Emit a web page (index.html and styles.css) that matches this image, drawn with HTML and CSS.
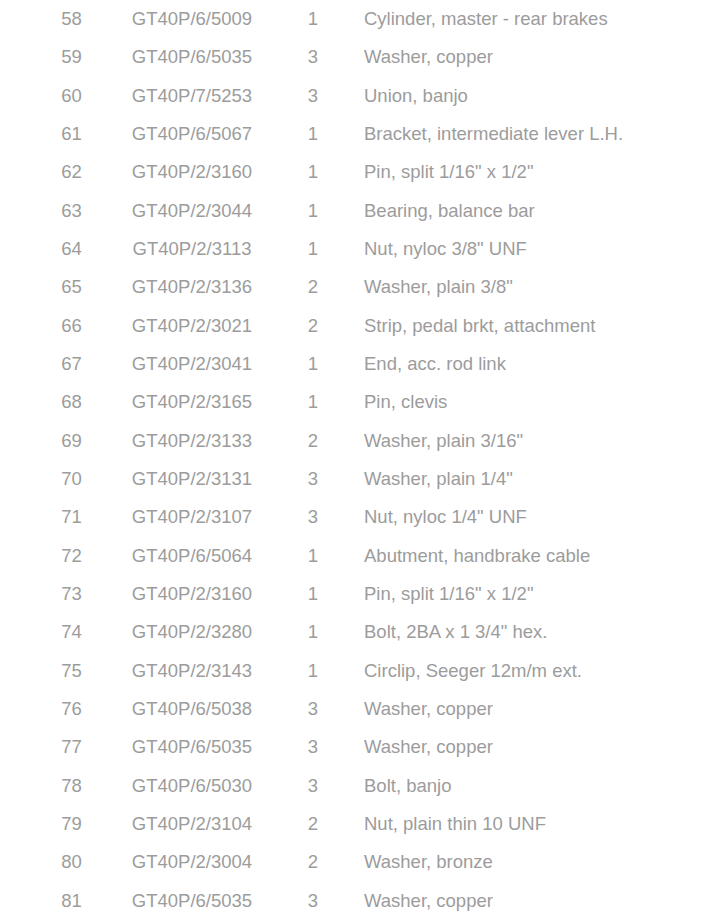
FILE: index.html
```html
<!DOCTYPE html>
<html lang="en">
<head>
    <meta charset="UTF-8">
    <meta name="viewport" content="width=device-width, initial-scale=1.0">
    <title>GT40 Parts - Brake Pedal Assembly</title>
    <link rel="stylesheet" href="styles.css">
</head>
<body>
    <table class="parts-table">
        <tbody>
            <tr><td class="item">58</td><td class="part">GT40P/6/5009</td><td class="qty">1</td><td class="desc">Cylinder, master - rear brakes</td></tr>
            <tr><td class="item">59</td><td class="part">GT40P/6/5035</td><td class="qty">3</td><td class="desc">Washer, copper</td></tr>
            <tr><td class="item">60</td><td class="part">GT40P/7/5253</td><td class="qty">3</td><td class="desc">Union, banjo</td></tr>
            <tr><td class="item">61</td><td class="part">GT40P/6/5067</td><td class="qty">1</td><td class="desc">Bracket, intermediate lever L.H.</td></tr>
            <tr><td class="item">62</td><td class="part">GT40P/2/3160</td><td class="qty">1</td><td class="desc">Pin, split 1/16" x 1/2"</td></tr>
            <tr><td class="item">63</td><td class="part">GT40P/2/3044</td><td class="qty">1</td><td class="desc">Bearing, balance bar</td></tr>
            <tr><td class="item">64</td><td class="part">GT40P/2/3113</td><td class="qty">1</td><td class="desc">Nut, nyloc 3/8" UNF</td></tr>
            <tr><td class="item">65</td><td class="part">GT40P/2/3136</td><td class="qty">2</td><td class="desc">Washer, plain 3/8"</td></tr>
            <tr><td class="item">66</td><td class="part">GT40P/2/3021</td><td class="qty">2</td><td class="desc">Strip, pedal brkt, attachment</td></tr>
            <tr><td class="item">67</td><td class="part">GT40P/2/3041</td><td class="qty">1</td><td class="desc">End, acc. rod link</td></tr>
            <tr><td class="item">68</td><td class="part">GT40P/2/3165</td><td class="qty">1</td><td class="desc">Pin, clevis</td></tr>
            <tr><td class="item">69</td><td class="part">GT40P/2/3133</td><td class="qty">2</td><td class="desc">Washer, plain 3/16"</td></tr>
            <tr><td class="item">70</td><td class="part">GT40P/2/3131</td><td class="qty">3</td><td class="desc">Washer, plain 1/4"</td></tr>
            <tr><td class="item">71</td><td class="part">GT40P/2/3107</td><td class="qty">3</td><td class="desc">Nut, nyloc 1/4" UNF</td></tr>
            <tr><td class="item">72</td><td class="part">GT40P/6/5064</td><td class="qty">1</td><td class="desc">Abutment, handbrake cable</td></tr>
            <tr><td class="item">73</td><td class="part">GT40P/2/3160</td><td class="qty">1</td><td class="desc">Pin, split 1/16" x 1/2"</td></tr>
            <tr><td class="item">74</td><td class="part">GT40P/2/3280</td><td class="qty">1</td><td class="desc">Bolt, 2BA x 1 3/4" hex.</td></tr>
            <tr><td class="item">75</td><td class="part">GT40P/2/3143</td><td class="qty">1</td><td class="desc">Circlip, Seeger 12m/m ext.</td></tr>
            <tr><td class="item">76</td><td class="part">GT40P/6/5038</td><td class="qty">3</td><td class="desc">Washer, copper</td></tr>
            <tr><td class="item">77</td><td class="part">GT40P/6/5035</td><td class="qty">3</td><td class="desc">Washer, copper</td></tr>
            <tr><td class="item">78</td><td class="part">GT40P/6/5030</td><td class="qty">3</td><td class="desc">Bolt, banjo</td></tr>
            <tr><td class="item">79</td><td class="part">GT40P/2/3104</td><td class="qty">2</td><td class="desc">Nut, plain thin 10 UNF</td></tr>
            <tr><td class="item">80</td><td class="part">GT40P/2/3004</td><td class="qty">2</td><td class="desc">Washer, bronze</td></tr>
            <tr><td class="item">81</td><td class="part">GT40P/6/5035</td><td class="qty">3</td><td class="desc">Washer, copper</td></tr>
        </tbody>
    </table>
</body>
</html>
```

FILE: styles.css
```css
* {
    margin: 0;
    padding: 0;
    box-sizing: border-box;
}

body {
    background-color: #ffffff;
    color: #9c9c9c;
    font-family: 'Liberation Sans', Arial, sans-serif;
    font-size: 18.5px;
}

.parts-table {
    border-collapse: collapse;
    margin: 0 0 0 41px;
    table-layout: fixed;
}

.parts-table td {
    height: 38.33px;
    vertical-align: middle;
    white-space: nowrap;
}

.item {
    width: 61px;
    text-align: center;
}

.part {
    width: 180px;
    text-align: center;
}

.qty {
    width: 62px;
    text-align: center;
}

.desc {
    padding-left: 20px;
    text-align: left;
}
```
